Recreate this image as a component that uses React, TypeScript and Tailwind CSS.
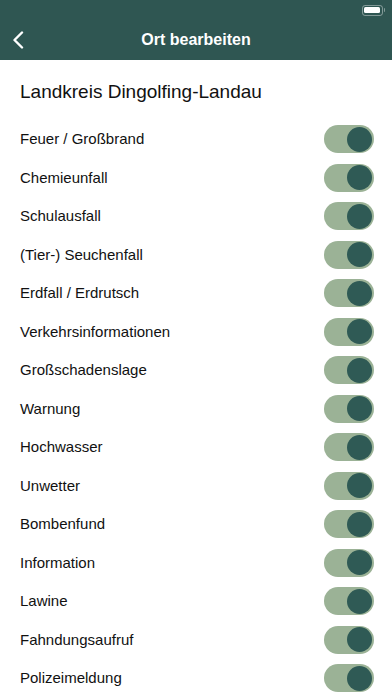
import { useState } from "react";

const categories = [
  "Feuer / Großbrand",
  "Chemieunfall",
  "Schulausfall",
  "(Tier-) Seuchenfall",
  "Erdfall / Erdrutsch",
  "Verkehrsinformationen",
  "Großschadenslage",
  "Warnung",
  "Hochwasser",
  "Unwetter",
  "Bombenfund",
  "Information",
  "Lawine",
  "Fahndungsaufruf",
  "Polizeimeldung",
];

const Toggle = ({ on, onClick }: { on: boolean; onClick: () => void }) => (
  <button
    onClick={onClick}
    className={`relative h-[28px] w-[50px] rounded-full transition ${on ? "bg-[#9bb296]" : "bg-[#e5e7eb]"}`}
  >
    <span
      className={`absolute top-[1.5px] h-[25px] w-[25px] rounded-full transition-all ${
        on ? "left-[23px] bg-[#2f5a55]" : "left-[2px] bg-white"
      }`}
    />
  </button>
);

export default function App() {
  const [enabled, setEnabled] = useState<boolean[]>(categories.map(() => true));

  return (
    <div className="h-[696px] w-[392px] overflow-hidden bg-white font-['Liberation_Sans',sans-serif] text-[#111]">
      <header className="relative h-[60px] bg-[#2f5652] text-white">
        <div className="flex h-[20px] items-center justify-end pr-[7px]">
          <div className="flex items-center">
            <div className="h-[11px] w-[21px] rounded-[3px] border border-white/40 p-[1.5px]">
              <div className="h-full w-full rounded-[1.5px] bg-white" />
            </div>
            <div className="ml-[1px] h-[4px] w-[1.5px] rounded-r bg-white/40" />
          </div>
        </div>
        <div className="relative flex h-[40px] items-center justify-center">
          <button className="absolute left-[12px] top-[11px]">
            <svg width="14" height="18" viewBox="0 0 14 18" fill="none">
              <path d="M10 1.5 L2.5 9 L10 16.5" stroke="white" strokeWidth="2.4" strokeLinecap="round" strokeLinejoin="round" />
            </svg>
          </button>
          <h1 className="text-[16px] font-bold">Ort bearbeiten</h1>
        </div>
      </header>

      <div className="px-[20px] pb-[16px] pt-[20px] text-[19px] leading-[24px]">Landkreis Dingolfing-Landau</div>

      <ul>
        {categories.map((c, i) => (
          <li key={c} className="flex h-[38.5px] items-center justify-between pl-[20px] pr-[18px]">
            <span className="text-[15px]">{c}</span>
            <Toggle
              on={enabled[i]}
              onClick={() => setEnabled((e) => e.map((v, j) => (j === i ? !v : v)))}
            />
          </li>
        ))}
      </ul>
    </div>
  );
}
